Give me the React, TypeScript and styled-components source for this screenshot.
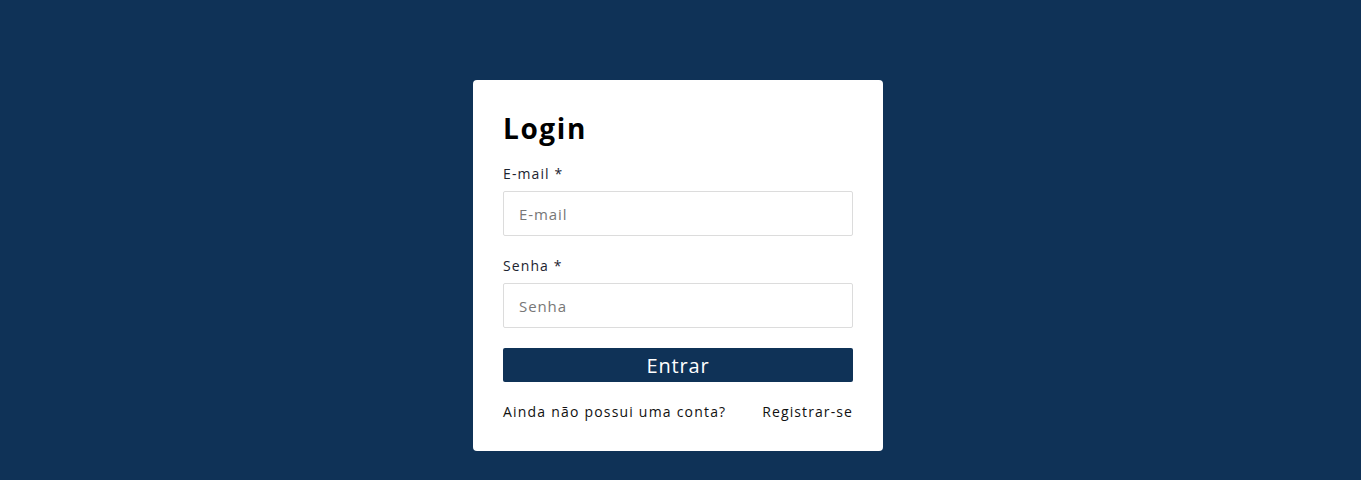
import React from "react";
import styled, { createGlobalStyle } from "styled-components";

const Global = createGlobalStyle`
  html, body { margin: 0; padding: 0; background: #0f3257; }
  body { font-family: "Open Sans", "DejaVu Sans", sans-serif; }
  * { box-sizing: border-box; }
`;

const Page = styled.main`
  min-height: 480px;
  display: flex;
  justify-content: center;
  align-items: flex-start;
  padding: 80px 5px 0 0;
  background: #0f3257;
`;

const Card = styled.form`
  width: 410px;
  background: #ffffff;
  border-radius: 4px;
  padding: 30px 30px 29px;
  display: flex;
  flex-direction: column;
`;

const Title = styled.h1`
  margin: 0 0 18px;
  font-size: 28px;
  line-height: 36px;
  font-weight: 700;
  letter-spacing: 1.6px;
  color: #000;
`;

const Field = styled.div`
  display: flex;
  flex-direction: column;
  gap: 8px;
  margin-bottom: 20px;
`;

const Label = styled.label`
  font-size: 14px;
  line-height: 19px;
  letter-spacing: 1.1px;
  color: #1c2430;
`;

const Input = styled.input`
  height: 45px;
  width: 100%;
  border: 1px solid #dcdcdc;
  border-radius: 2px;
  padding: 0 15px;
  font-family: inherit;
  font-size: 15px;
  letter-spacing: 0.9px;
  color: #222;
  outline: none;
  &::placeholder { color: #777; }
`;

const Button = styled.button`
  height: 34px;
  width: 100%;
  border: none;
  border-radius: 2px;
  background: #0f3257;
  color: #fff;
  font-family: inherit;
  font-size: 20px;
  letter-spacing: 0.8px;
  cursor: pointer;
`;

const Footer = styled.div`
  display: flex;
  justify-content: space-between;
  margin-top: 20px;
  font-size: 14px;
  line-height: 20px;
  letter-spacing: 1.2px;
  color: #111;
`;

const Link = styled.a`
  color: #111;
  text-decoration: none;
  letter-spacing: 1.1px;
`;

export default function App() {
  return (
    <>
      <Global />
      <Page>
        <Card onSubmit={(e) => e.preventDefault()}>
          <Title>Login</Title>
          <Field>
            <Label>E-mail *</Label>
            <Input type="email" placeholder="E-mail" />
          </Field>
          <Field>
            <Label>Senha *</Label>
            <Input type="password" placeholder="Senha" />
          </Field>
          <Button type="submit">Entrar</Button>
          <Footer>
            <span>Ainda não possui uma conta?</span>
            <Link href="#">Registrar-se</Link>
          </Footer>
        </Card>
      </Page>
    </>
  );
}
